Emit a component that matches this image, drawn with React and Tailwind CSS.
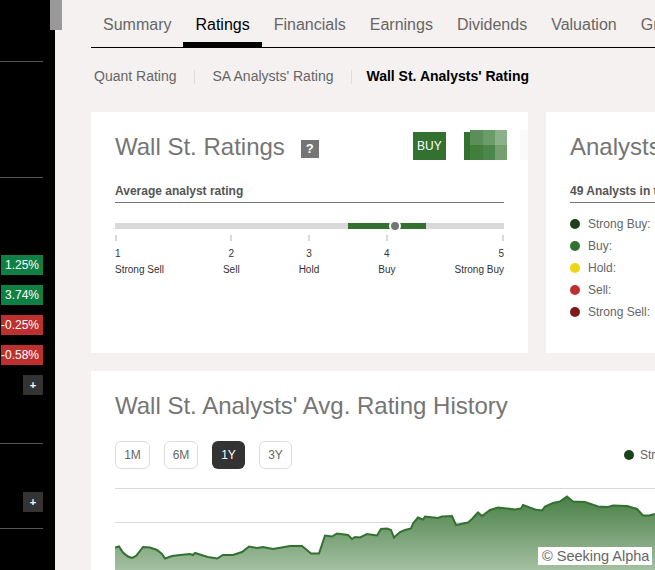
import React from 'react';

const tabs = ['Summary', 'Ratings', 'Financials', 'Earnings', 'Dividends', 'Valuation', 'Growth'];
const scale = [
  { n: 1, label: 'Strong Sell', align: 'items-start' },
  { n: 2, label: 'Sell', align: 'items-center' },
  { n: 3, label: 'Hold', align: 'items-center' },
  { n: 4, label: 'Buy', align: 'items-center' },
  { n: 5, label: 'Strong Buy', align: 'items-end' },
];
const legend = [
  { label: 'Strong Buy:', color: 'bg-[#1b4218]' },
  { label: 'Buy:', color: 'bg-[#337130]' },
  { label: 'Hold:', color: 'bg-[#edd712]' },
  { label: 'Sell:', color: 'bg-[#bd3030]' },
  { label: 'Strong Sell:', color: 'bg-[#7e1a1a]' },
];
const ranges = [
  { label: '1M', width: 'w-[35px]' },
  { label: '6M', width: 'w-[34px]' },
  { label: '1Y', width: 'w-[33px]' },
  { label: '3Y', width: 'w-[33px]' },
];

const line =
  'M115 547.5L119 546.5L123 552.5L128 556.5L132 558L136 556L143 547L150 547.5L157 550L162 554L165 558.5L172 556L180 555L190 554L193 555L195 553L203 555.5L208 557L217 558.5L223 555L233 555L242 552L249 546.5L257 548L263 547L273 549L290 546L302 546L311 553.5L319 553.5L325 535.5L332 536.5L337 533.5L348 535L352 539L355 537L360 537.5L367 534L377 535.5L381 529L387 528.5L391 530L394 537.5L400 532L405 530L411 528.5L413 523.5L418 517.5L423 519.5L425 516.5L438 518L442 516.5L452 516L456 525L468 522.5L472 519L478 512.5L482 516L490 510L498 507.5L507 508.5L515 509.5L521 508.5L523 505L535 509.5L542 510.5L545 506.5L553 503L560 501.5L567 496.5L573 501.5L585 502L598 506.5L608 507L613 505.5L627 506L637 509L643 515.5L649 515.5L655 514';

function Badge({ children, color }) {
  return (
    <div className={`h-5 w-[42px] flex items-center justify-end pr-[4px] text-[12px] text-white ${color}`}>
      {children}
    </div>
  );
}

function Plus() {
  return (
    <div className="h-5 w-5 bg-[#333] flex items-center justify-center text-white text-[11px] font-bold leading-none">+</div>
  );
}

function CardTitle({ children }) {
  return <h2 className="text-[24px] leading-[30px] text-[#757575] whitespace-nowrap">{children}</h2>;
}

export default function App() {
  return (
    <div className="relative h-[570px] w-[655px] overflow-hidden flex bg-[#f4f1f0] font-['Liberation_Sans',Arial,sans-serif]">
      {/* scrollbar thumb */}
      <div className="absolute left-[50px] top-0 h-[30px] w-3 bg-[#999]" />

      <aside className="w-[55px] shrink-0 bg-black flex flex-col items-end pr-3">
        <div className="mt-[61px] h-px w-full bg-[#555]" />
        <div className="mt-[115px] h-px w-full bg-[#555]" />
        <div className="mt-[77px] flex flex-col items-end gap-[10px]">
          <Badge color="bg-[#0e8043]">1.25%</Badge>
          <Badge color="bg-[#0e8043]">3.74%</Badge>
          <Badge color="bg-[#bd3030]">-0.25%</Badge>
          <Badge color="bg-[#bd3030]">-0.58%</Badge>
          <Plus />
        </div>
        <div className="mt-[48px] h-px w-full bg-[#555]" />
        <div className="mt-[48px]"><Plus /></div>
        <div className="mt-[16px] h-px w-full bg-[#555]" />
      </aside>

      <main className="flex-1 min-w-0 pl-9">
        <nav className="h-[48px] border-b border-black flex items-end whitespace-nowrap">
          {tabs.map((t) => (
            <div
              key={t}
              className={`h-[48px] shrink-0 px-3 pt-[16px] text-[16px] leading-[20px] ${
                t === 'Ratings' ? 'text-black border-b-[5px] border-black' : 'text-[#666]'
              }`}
            >
              {t}
            </div>
          ))}
        </nav>

        <div className="h-[64px] pt-[20px] pl-[3px] flex items-start text-[14px] leading-[17px] text-[#666] whitespace-nowrap">
          <span>Quant Rating</span>
          <span className="ml-[17px] mr-[18px] mt-[2px] h-[14px] w-px bg-[#ddd]" />
          <span>SA Analysts' Rating</span>
          <span className="ml-[18px] mr-[14px] mt-[2px] h-[14px] w-px bg-[#ddd]" />
          <span className="font-bold text-black">Wall St. Analysts' Rating</span>
        </div>

        <div className="flex gap-[18px]">
          <section className="w-[437px] h-[241px] shrink-0 bg-white pl-6 pr-6 overflow-hidden">
            <div className="h-[72px] flex items-start">
              <div className="pt-[20px] shrink-0"><CardTitle>Wall St. Ratings</CardTitle></div>
              <div className="ml-4 mt-[28px] h-[18px] w-[18px] shrink-0 bg-[#757575] text-white text-[13px] font-bold flex items-center justify-center">?</div>
              <div className="ml-[94px] mt-[20px] h-[28px] w-[33px] shrink-0 bg-[#337130] text-white text-[12px] flex items-center justify-center">BUY</div>
              {/* blurred score tile */}
              <div className="ml-[18px] mt-[18px] shrink-0 flex items-end">
                <div className="h-[28px] w-[6px] bg-[#337130]" />
                <div className="grid grid-cols-[13px_12px_12px] grid-rows-[15px_15px]">
                  <div className="bg-[#5b8f59]" />
                  <div className="bg-[#6c9b6a]" />
                  <div className="bg-[#8cb08a]" />
                  <div className="bg-[#427f3f]" />
                  <div className="bg-[#4b874a]" />
                  <div className="bg-[#74a071]" />
                </div>
              </div>
              <div className="ml-[13px] mt-[18px] h-[30px] w-[12px] shrink-0 bg-[#fafafa]" />
            </div>
            <div className="h-[15px] border-b border-[#757575] box-content pb-[3px] text-[12px] leading-[15px] font-bold text-[#555]">
              Average analyst rating
            </div>
            <div className="relative mt-5 h-[6px] bg-[#d9d9d9]">
              <div className="absolute left-[233px] top-0 h-[6px] w-[78px] bg-[#337130]" />
              <div className="absolute left-[274px] top-[-3px] h-3 w-3 rounded-full bg-[#757575] border-2 border-white" />
            </div>
            <div className="mt-[6px] flex justify-between text-[10px] leading-[16px] text-[#333]">
              {scale.map((s) => (
                <div key={s.n} className={`flex flex-col ${s.align}`}>
                  <div className="h-[6px] w-[2px] bg-[#d9d9d9]" />
                  <div className="mt-[5px]">{s.n}</div>
                  <div>{s.label}</div>
                </div>
              ))}
            </div>
          </section>

          <section className="w-[300px] h-[241px] shrink-0 bg-white pl-6">
            <div className="pt-5 h-[72px]"><CardTitle>Analysts' Ratings</CardTitle></div>
            <div className="h-[15px] box-content pb-[3px] border-b border-[#757575] text-[12px] leading-[15px] font-bold text-[#555] whitespace-nowrap">
              49 Analysts in the consensus
            </div>
            <ul className="mt-[12px] flex flex-col gap-[4px]">
              {legend.map((l) => (
                <li key={l.label} className="h-[18px] flex items-center gap-2 text-[12px] text-[#666]">
                  <span className={`h-[10px] w-[10px] rounded-full ${l.color}`} />
                  {l.label}
                </li>
              ))}
            </ul>
          </section>
        </div>

        <section className="mt-[18px] w-[600px] bg-white pl-6 pt-5">
          <CardTitle>Wall St. Analysts' Avg. Rating History</CardTitle>
          <div className="mt-[20px] h-[28px] flex items-center gap-[14px] text-[12px]">
            {ranges.map((r) => (
              <div
                key={r.label}
                className={`h-[28px] shrink-0 rounded-[6px] flex items-center justify-center ${r.width} ${
                  r.label === '1Y' ? 'bg-[#333] text-white' : 'border border-[#ddd] text-[#666]'
                }`}
              >
                {r.label}
              </div>
            ))}
            <div className="ml-[318px] flex items-center gap-[6px] shrink-0">
              <span className="h-[10px] w-[10px] rounded-full bg-[#1b4218]" />
              <span className="text-[#666] whitespace-nowrap">Strong Buy</span>
            </div>
          </div>
          <div className="relative mt-[19px] h-[82px] w-[540px] overflow-hidden">
            <svg className="block" width="540" height="82" viewBox="115 488 540 82">
              <defs>
                <linearGradient id="area" x1="0" y1="0" x2="0" y2="1">
                  <stop offset="0" stopColor="#4a8046" />
                  <stop offset="1" stopColor="#a4c0a2" />
                </linearGradient>
              </defs>
              <line x1="115" x2="655" y1="488.5" y2="488.5" stroke="#d9d9d9" />
              <line x1="115" x2="655" y1="522.5" y2="522.5" stroke="#d9d9d9" />
              <path d={line + 'L655 570L115 570Z'} fill="url(#area)" stroke="none" />
              <path d={line} fill="none" stroke="#337130" strokeWidth="2" />
            </svg>
            <div className="absolute left-[423px] top-[59px] h-[18px] w-[114px] bg-white pl-1 text-[14.5px] leading-[18px] text-[#666] whitespace-nowrap">© Seeking Alpha</div>
          </div>
        </section>
      </main>
    </div>
  );
}
